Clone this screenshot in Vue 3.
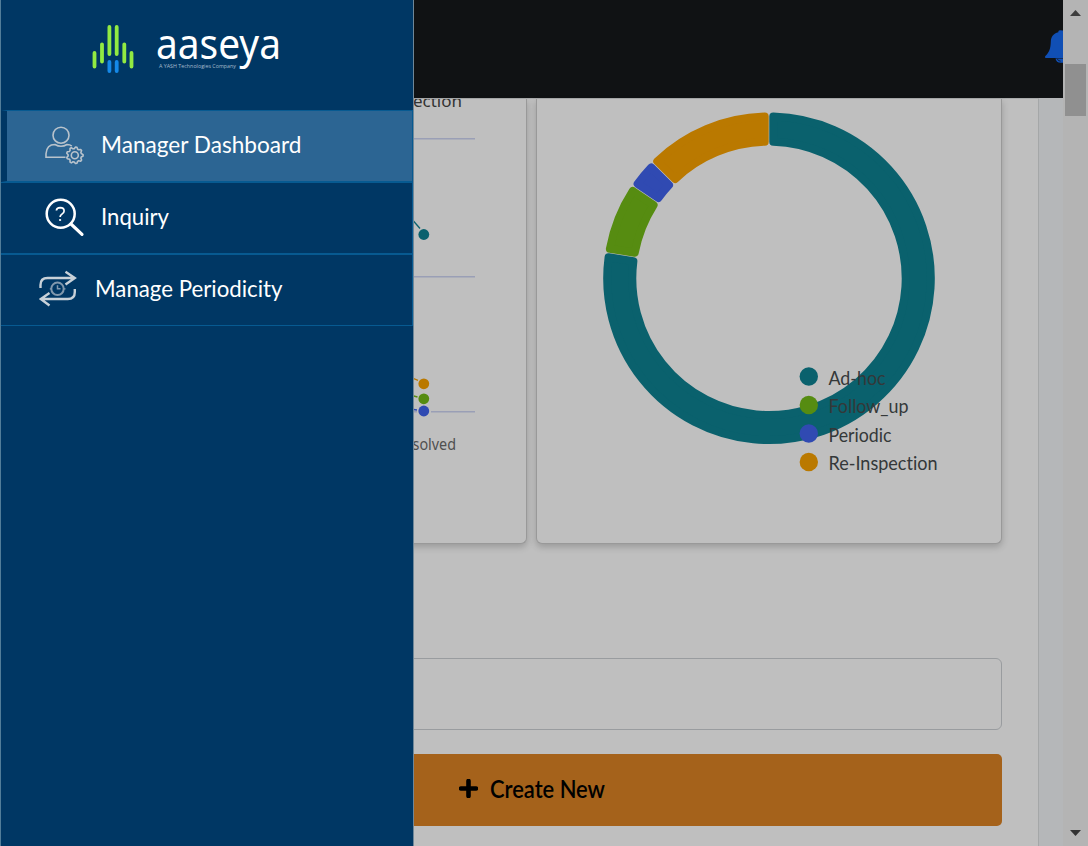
<script setup>
const rad = (deg) => ((deg - 90) * Math.PI) / 180
const point = (r, a) => `${(769 + r * Math.cos(a)).toFixed(2)} ${(278.3 + r * Math.sin(a)).toFixed(2)}`

// Each slice is inset by the corner radius; a round-joined stroke fills the inset back out.
function slice(from, to) {
  const inset = 4
  const outer = 165.8 - inset
  const inner = 132.7 + inset
  const a = rad(from)
  const b = rad(to)
  const o = (inset + 0.3) / outer
  const i = (inset + 0.3) / inner
  const large = to - from > 180 ? 1 : 0
  return `M${point(outer, a + o)}A${outer} ${outer} 0 ${large} 1 ${point(outer, b - o)}L${point(inner, b - i)}A${inner} ${inner} 0 ${large} 0 ${point(inner, a + i)}Z`
}

const slices = [
  { label: 'Ad-hoc', color: '#0a616d', from: 0, to: 279, y: 376.5, w: 57 },
  { label: 'Follow_up', color: '#568c11', from: 279, to: 304.2, y: 405, w: 80 },
  { label: 'Periodic', color: '#304ab2', from: 304.2, to: 314.8, y: 433.5, w: 63 },
  { label: 'Re-Inspection', color: '#ba7900', from: 314.8, to: 360, y: 462, w: 109 },
]

const gearPoints = Array.from({ length: 36 }, (_, n) => {
  const r = n % 4 < 2 ? 8.3 : 6.7
  const a = ((n * 10 - 5) * Math.PI) / 180
  return `${(74.8 + r * Math.cos(a)).toFixed(2)},${(155.3 + r * Math.sin(a)).toFixed(2)}`
}).join(' ')
</script>

<template>
  <div class="screen">
    <div class="page">
      <header class="topbar">
        <svg class="bell" viewBox="1044 28 19 36" width="19" height="36">
          <path d="M1060 30.2c-1.2 0-1.7.8-1.7 2-4.8 1.1-7.3 4.6-7.5 9.3-.2 7.4-1.5 10.7-5.2 14.2-1.2 1.2-.6 2.4.9 2.4h27V32z" fill="#104fb5" />
          <path d="M1055.5 58.5q.7 4.2 5.2 4.2h3v-4.2z" fill="#104fb5" />
          <path d="M1057.2 58.8q.8 2.2 3.4 2.4" fill="none" stroke="#101214" stroke-width=".8" />
        </svg>
      </header>
      <main class="content">
        <section class="cards">
          <article class="card">
            <svg viewBox="61 98 465 445" width="465" height="445">
              <g stroke="#9a9fb6" stroke-width="1.5">
                <path d="M61 138.7H475M61 276.7H475M61 411.7H417M431 411.7H475" />
              </g>
              <text x="413" y="107" class="axis dark" textLength="49" lengthAdjust="spacingAndGlyphs">ection</text>
              <g fill="none" stroke-width="1.3">
                <path d="M410 217L420 228.5" stroke="#0a616d" />
                <path d="M410 377L418 380.3" stroke="#ba7900" />
                <path d="M410 395L417.5 397" stroke="#568c11" />
                <path d="M410 409L417 410" stroke="#304ab2" />
              </g>
              <circle cx="423.8" cy="234.5" r="5.4" fill="#0a616d" />
              <circle cx="423.8" cy="383.8" r="5.4" fill="#ba7900" />
              <circle cx="423.8" cy="398.8" r="5.4" fill="#568c11" />
              <circle cx="423.8" cy="411" r="5.4" fill="#304ab2" />
              <text x="412.5" y="450" class="axis" textLength="43.5" lengthAdjust="spacingAndGlyphs">solved</text>
            </svg>
          </article>
          <article class="card">
            <svg viewBox="537 98 464 445" width="464" height="445">
              <path
                v-for="s in slices"
                :key="s.label"
                :d="slice(s.from, s.to)"
                :fill="s.color"
                :stroke="s.color"
                stroke-width="8"
                stroke-linejoin="round"
              />
              <g v-for="s in slices" :key="s.label">
                <circle cx="808.8" :cy="s.y" r="9.2" :fill="s.color" />
                <text x="828.5" :y="s.y + 8" class="legend" :textLength="s.w" lengthAdjust="spacingAndGlyphs">{{ s.label }}</text>
              </g>
            </svg>
          </article>
        </section>
        <div class="field"></div>
        <button class="create">
          <svg viewBox="0 0 19 19" width="19" height="19">
            <path d="M9.5 2v15M2 9.5h15" stroke="#000" stroke-width="4.6" stroke-linecap="round" />
          </svg>
          <svg class="create-label" width="117" height="34"><text x="0" y="26" textLength="115" lengthAdjust="spacingAndGlyphs">Create New</text></svg>
        </button>
      </main>
    </div>

    <div class="scrollbar">
      <svg viewBox="0 0 11 6" width="11" height="6"><path d="M0 6L5.5 0L11 6Z" fill="#3d3d3d" /></svg>
      <div class="thumb"></div>
      <svg class="down" viewBox="0 0 11 6" width="11" height="6"><path d="M0 0L5.5 6L11 0Z" fill="#333" /></svg>
    </div>

    <aside class="drawer">
      <div class="brand">
        <svg viewBox="0 0 412 110" width="412" height="110">
          <g stroke-linecap="round" stroke-width="3.8" stroke="#92ea42">
            <path d="M94.5 53v13.5M102 44.3v17.3M109.4 27v27M116.7 27v27M124.3 44.3v17.3M131.5 53v13.5" />
            <path d="M109.4 62v9M116.7 62v9" stroke="#1589e8" />
          </g>
          <text x="156" y="59" class="wordmark" textLength="125" lengthAdjust="spacingAndGlyphs">aaseya</text>
          <text x="159" y="68.3" class="tagline" textLength="77" lengthAdjust="spacingAndGlyphs">A YASH Technologies Company</text>
        </svg>
      </div>
      <nav>
        <a class="item active">
          <svg class="icon" viewBox="44 125 41 41" width="41" height="41" fill="none" stroke="#b9c3cc" stroke-width="1.6">
            <circle cx="61" cy="135.2" r="8" />
            <path d="M65.5 157.2H46v-3.5q.7-9.2 9-9.2 6 3.6 12 0 3 0 4.8 1.6" />
            <polygon :points="gearPoints" stroke-linejoin="round" />
            <circle cx="74.8" cy="155.3" r="3.5" />
          </svg>
          <svg class="label" width="206" height="40"><text x="1" y="26.5" textLength="200.5" lengthAdjust="spacingAndGlyphs">Manager Dashboard</text></svg>
        </a>
        <a class="item">
          <svg class="icon" viewBox="44 197 41 41" width="41" height="41" fill="none" stroke="#fff">
            <circle cx="60.7" cy="213.8" r="14" stroke-width="2.5" />
            <path d="M71 224L82 234.3" stroke-width="3.2" stroke-linecap="round" />
            <path d="M56.4 210.5q.2-2.8 3.8-2.8 3.9.1 3.9 3.2 0 1.7-2 3-2 1.1-2 3.2" stroke-width="1.7" />
            <path d="M59.1 220h2" stroke-width="1.7" />
          </svg>
          <svg class="label" width="80" height="40"><text x="1" y="26.5" textLength="68" lengthAdjust="spacingAndGlyphs">Inquiry</text></svg>
        </a>
        <a class="item shifted">
          <svg class="icon" viewBox="38 269 41 41" width="41" height="41" fill="none" stroke="#c8d1d9" stroke-width="2.4">
            <path d="M40.5 288v-3q0-7 7-7h27M65.5 271.8L74.8 278L65.5 284.5" />
            <path d="M74.8 289v3q0 7-7 7H41M49.5 293L40.8 299L49.5 305.5" />
            <circle cx="57.5" cy="288.8" r="6.2" stroke="#8198ad" stroke-width="2" />
            <path d="M57.5 285.3v3.5h3" stroke="#8198ad" stroke-width="1.5" />
            <path d="M49.8 288.8h2M63.5 288.8h2" stroke="#8198ad" stroke-width="1.2" />
          </svg>
          <svg class="label" width="194" height="40"><text x="1" y="26.5" textLength="187.5" lengthAdjust="spacingAndGlyphs">Manage Periodicity</text></svg>
        </a>
      </nav>
    </aside>
  </div>
</template>

<style>
body { margin: 0; overflow: hidden; }
</style>

<style scoped>
* { box-sizing: border-box; }
svg { display: block; flex: none; }
.screen {
  position: relative;
  display: flex;
  width: 1088px;
  height: 846px;
  overflow: hidden;
  background: #b4b4b4;
  font-family: "Noto Sans", "Open Sans", sans-serif;
}
.page {
  width: 1063px;
  flex: none;
  display: flex;
  flex-direction: column;
  background: #b5b7b9;
}
.topbar {
  height: 98px;
  flex: none;
  display: flex;
  justify-content: flex-end;
  padding-top: 28px;
  background: #101214;
}
.content {
  flex: 1;
  width: 1039px;
  padding: 0 37px 0 60px;
  background: #bfbfbf;
  border-right: 1px solid #a5a7a8;
  border-top: 1px solid #a9abac;
}
.cards { display: flex; gap: 9px; height: 445px; margin-bottom: 114px; }
.card {
  width: 467px;
  flex: none;
  overflow: hidden;
  border: 1px solid #999;
  border-top: 0;
  border-radius: 0 0 6px 6px;
  background: #bfbfbf;
  box-shadow: 0 3px 7px rgba(0, 0, 0, 0.2);
}
.card + .card { width: 466px; }
.card svg { margin-top: -1px; }
.axis { font: 16.5px "Noto Sans", sans-serif; fill: #505050; }
.axis.dark { fill: #333; }
.legend { font: 400 18.5px Lato, "Noto Sans", sans-serif; font-variant-ligatures: none; fill: #343839; }
.field { height: 72px; width: 942px; border: 1px solid #999c9f; border-radius: 6px; }
.create {
  width: 942px;
  height: 72px;
  margin-top: 24px;
  padding: 0 0 4px 3px;
  display: flex;
  align-items: center;
  justify-content: center;
  gap: 12px;
  border: 0;
  border-radius: 5px;
  background: #a5621b;
}
.create-label { margin-top: 2px; overflow: visible; }
.create-label text { font: 600 24px Lato, sans-serif; fill: #000; }
.scrollbar {
  width: 25px;
  display: flex;
  flex-direction: column;
  align-items: center;
  padding: 10px 0;
  background: #b4b4b4;
}
.thumb { width: 21px; height: 52px; margin-top: 48px; background: #909090; }
.down { margin-top: auto; }
.drawer {
  position: absolute;
  left: 0;
  top: 0;
  width: 414px;
  height: 846px;
  border-left: 1px solid #527d99;
  border-right: 1px solid #6f8798;
  background: #003764;
}
.brand { height: 110px; }
.brand svg { margin-left: -1px; }
.wordmark { font: 41px "Noto Sans", sans-serif; fill: #fff; }
.tagline { font: 5.2px "Open Sans", sans-serif; fill: #a8bdce; }
.item {
  display: flex;
  align-items: center;
  height: 72px;
  padding-left: 43px;
  border: 1px solid #075a91;
  border-left: 0;
  box-shadow: 0 1px 0 #075a91;
}
.item.active { padding-left: 37px; border-left: 6px solid #003764; background: #2c6593; }
.item.shifted { padding-left: 37px; box-shadow: none; }
.icon { margin-top: -2px; }
.label { margin: -1px 0 0 15px; overflow: visible; }
.label text { font: 23.5px Lato, "Noto Sans", sans-serif; font-variant-ligatures: none; fill: #fff; }
</style>
